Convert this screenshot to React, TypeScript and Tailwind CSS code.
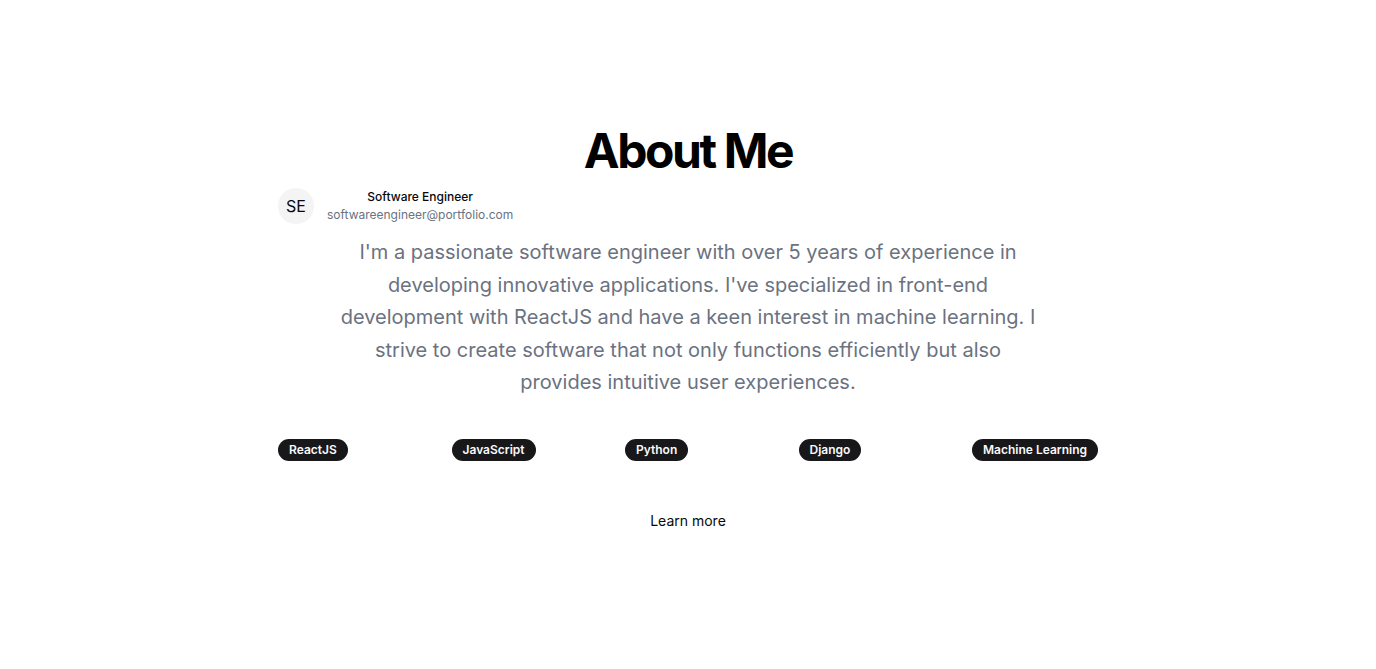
export default function App() {
  const skills = ["ReactJS", "JavaScript", "Python", "Django", "Machine Learning"];
  return (
    <div
      className="min-h-screen bg-white flex justify-center"
      style={{ fontFamily: "Inter, 'Noto Sans', sans-serif" }}
    >
      <section className="w-[820px] pt-[127px] flex flex-col">
        <h1 className="text-center text-5xl font-bold tracking-tighter text-black leading-none">
          About Me
        </h1>
        <div className="flex items-center mt-[13px]">
          <div className="w-9 h-9 rounded-full bg-[#f4f4f5] flex items-center justify-center text-base text-[#09090b]">
            SE
          </div>
          <div className="ml-[13px] flex flex-col items-center">
            <span className="text-xs font-medium text-[#09090b] leading-4">Software Engineer</span>
            <span className="text-xs text-[#6b7280] leading-4 mt-[2px]">softwareengineer@portfolio.com</span>
          </div>
        </div>
        <p className="mx-auto mt-3 max-w-[700px] text-center text-xl leading-relaxed text-[#6b7280]">
          I'm a passionate software engineer with over 5 years of experience in developing
          innovative applications. I've specialized in front-end development with ReactJS and have
          a keen interest in machine learning. I strive to create software that not only functions
          efficiently but also provides intuitive user experiences.
        </p>
        <div className="grid grid-cols-5 gap-[47.5px] mt-[37px]">
          {skills.map((s) => (
            <div key={s}>
              <span className="inline-flex items-center rounded-full border border-transparent bg-[#18181b] px-2.5 py-0.5 text-xs font-semibold text-[#fafafa]">
                {s}
              </span>
            </div>
          ))}
        </div>
        <div className="flex justify-center mt-10">
          <button className="text-sm font-normal text-[#09090b] h-10 px-4">Learn more</button>
        </div>
      </section>
    </div>
  );
}
